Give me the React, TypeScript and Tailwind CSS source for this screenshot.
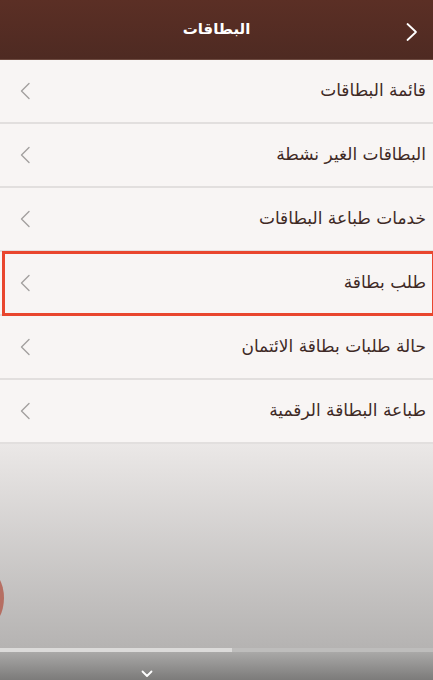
import React from 'react';

const ITEMS = [
  'قائمة البطاقات',
  'البطاقات الغير نشطة',
  'خدمات طباعة البطاقات',
  'طلب بطاقة',
  'حالة طلبات بطاقة الائتمان',
  'طباعة البطاقة الرقمية',
];

function Chevron({ className }: { className?: string }) {
  return (
    <svg width="12" height="18" viewBox="0 0 12 18" fill="none" className={className}>
      <path d="M10 1.5L2.5 9L10 16.5" stroke="currentColor" strokeWidth="1.4" strokeLinecap="round" strokeLinejoin="round" />
    </svg>
  );
}

export default function App() {
  return (
    <div
      className="relative w-[433px] h-[680px] overflow-hidden flex flex-col bg-[#ece9e8]"
      style={{ fontFamily: '"DejaVu Sans", sans-serif' }}
    >
      <header className="h-[60px] shrink-0 flex items-center justify-center relative bg-gradient-to-b from-[#5b2f25] to-[#4e2a22] border-b border-[#6d4a40]">
        <h1 dir="rtl" className="text-white text-[15px] font-bold">البطاقات</h1>
        <svg width="14" height="20" viewBox="0 0 14 20" fill="none" className="absolute right-[14px] top-[22px] text-white">
          <path d="M2.5 2L11 10L2.5 18" stroke="currentColor" strokeWidth="1.8" strokeLinecap="round" strokeLinejoin="round" />
        </svg>
      </header>

      <ul className="shrink-0">
        {ITEMS.map((item, i) => (
          <li
            key={item}
            dir="rtl"
            className="relative h-[64px] flex items-center justify-between bg-[#f8f5f4] border-b-2 border-[#e2dfde] pr-[7px] pl-[19px]"
          >
            <span className="text-[17px] text-[#3f2a26]">{item}</span>
            <Chevron className="text-[#a3a09f]" />
            {i === 3 && (
              <span className="absolute left-[2px] right-[-2px] top-[-1px] bottom-[-2px] border-[3px] border-[#e9462e] pointer-events-none" />
            )}
          </li>
        ))}
      </ul>

      <div className="flex-1 relative bg-gradient-to-b from-[#ebe8e7] to-[#b5b3b2]">
        <span className="absolute left-[-30px] top-[126px] w-[34px] h-[56px] rounded-[50%] bg-[#b35a4b] opacity-80" />
      </div>

      <div className="h-[4px] shrink-0 flex">
        <div className="w-[232px] bg-[#dcdbda]" />
        <div className="flex-1 bg-[#bebdbc]" />
      </div>
      <div className="h-[28px] shrink-0 relative bg-gradient-to-b from-[#aaa9a8] to-[#7c7b7a]">
        <svg width="12" height="8" viewBox="0 0 12 8" fill="none" className="absolute left-[141px] bottom-[2px] text-white">
          <path d="M1.5 1.5L6 6L10.5 1.5" stroke="currentColor" strokeWidth="1.8" strokeLinecap="round" strokeLinejoin="round" />
        </svg>
      </div>
    </div>
  );
}
